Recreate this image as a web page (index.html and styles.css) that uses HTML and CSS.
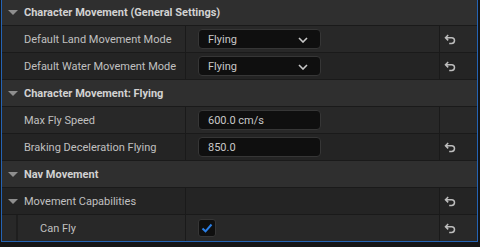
FILE: index.html
```html
<!DOCTYPE html>
<html lang='en'>
<head>
    <meta charset='UTF-8'>
    <title>Details</title>
    <link rel="stylesheet" href="styles.css">
</head>
<body>
    <div id='panel'>
        <div class='cat'><span class='tri'></span>Character Movement (General Settings)</div>
        <div class='row light'>
            <div class='name'>Default Land Movement Mode</div>
            <div class='value'>
                <div class='combo'>Flying<svg class='chev' width='10' height='6' viewBox='0 0 10 6'><path d='M1 1 L5 5 L9 1' fill='none' stroke='#c8c8c8' stroke-width='1.6'/></svg></div>
            </div>
            <div class='reset'><svg width='12' height='11' viewBox='0 0 12 11'><path d='M4.2 1 L1.5 3.7 L4.2 6.4 M1.9 3.7 H7.6 A2.9 2.9 0 0 1 7.6 9.5 H5.2' fill='none' stroke='#bdbdbd' stroke-width='1.5'/></svg></div>
        </div>
        <div class='row'>
            <div class='name'>Default Water Movement Mode</div>
            <div class='value'>
                <div class='combo'>Flying<svg class='chev' width='10' height='6' viewBox='0 0 10 6'><path d='M1 1 L5 5 L9 1' fill='none' stroke='#c8c8c8' stroke-width='1.6'/></svg></div>
            </div>
            <div class='reset'><svg width='12' height='11' viewBox='0 0 12 11'><path d='M4.2 1 L1.5 3.7 L4.2 6.4 M1.9 3.7 H7.6 A2.9 2.9 0 0 1 7.6 9.5 H5.2' fill='none' stroke='#bdbdbd' stroke-width='1.5'/></svg></div>
        </div>
        <div class='cat'><span class='tri'></span>Character Movement: Flying</div>
        <div class='row light'>
            <div class='name'>Max Fly Speed</div>
            <div class='value'><div class='field'>600.0 cm/s</div></div>
            <div class='reset'></div>
        </div>
        <div class='row'>
            <div class='name'>Braking Deceleration Flying</div>
            <div class='value'><div class='field'>850.0</div></div>
            <div class='reset'><svg width='12' height='11' viewBox='0 0 12 11'><path d='M4.2 1 L1.5 3.7 L4.2 6.4 M1.9 3.7 H7.6 A2.9 2.9 0 0 1 7.6 9.5 H5.2' fill='none' stroke='#bdbdbd' stroke-width='1.5'/></svg></div>
        </div>
        <div class='cat'><span class='tri'></span>Nav Movement</div>
        <div class='row'>
            <div class='name'><span class='tri'></span>Movement Capabilities</div>
            <div class='value'></div>
            <div class='reset'><svg width='12' height='11' viewBox='0 0 12 11'><path d='M4.2 1 L1.5 3.7 L4.2 6.4 M1.9 3.7 H7.6 A2.9 2.9 0 0 1 7.6 9.5 H5.2' fill='none' stroke='#bdbdbd' stroke-width='1.5'/></svg></div>
        </div>
        <div class='row light last'>
            <div class='name indent'><span class='guide'></span>Can Fly</div>
            <div class='value'>
                <div class='check'><svg width='12' height='10' viewBox='0 0 12 10'><path d='M1.5 5.5 L4.5 8.3 L10.5 1.5' fill='none' stroke='#2a7fe6' stroke-width='2'/></svg></div>
            </div>
            <div class='reset'><svg width='12' height='11' viewBox='0 0 12 11'><path d='M4.2 1 L1.5 3.7 L4.2 6.4 M1.9 3.7 H7.6 A2.9 2.9 0 0 1 7.6 9.5 H5.2' fill='none' stroke='#bdbdbd' stroke-width='1.5'/></svg></div>
        </div>
    </div>
</body>
</html>
```
FILE: styles.css
```css
html, body {
    margin: 0; padding: 0;
    background: #151515;
    font-family: Roboto, "Liberation Sans", sans-serif;
    font-size: 11px;
    color: #c0c0c0;
    overflow: hidden;
    white-space: nowrap;
}
#panel {
    width: 475px;
    margin: -1px 0 0 1px;
    border: 1px solid #2463b4;
    border-top: none;
    background: #1a1a1a;
}
.cat {
    display: flex; align-items: center;
    height: 26px;
    border-bottom: 1px solid #1a1a1a;
    background: #2f2f2f;
    font-weight: bold;
    color: #d2d2d2;
    padding-left: 22px;
    position: relative;
}
.tri {
    width: 0; height: 0;
    border-left: 5px solid transparent;
    border-right: 5px solid transparent;
    border-top: 5px solid #8e8e8e;
    position: absolute; left: 6px; top: 11px;
}
.row {
    display: grid;
    grid-template-columns: 183px 253px 37px;
    column-gap: 1px;
    height: 26px;
    border-bottom: 1px solid #1a1a1a;
    background: #1a1a1a;
}
.row.last { border-bottom: none; }
.row > div { background: #242424; display: flex; align-items: center; }
.row.light > div { background: #282828; }
.name { padding-left: 22px; position: relative; }
.name.indent { padding-left: 0; }
.guide {
    width: 14px; height: 26px;
    border-right: 2px solid #1e1e1e;
    margin-right: 22px;
}
.value { padding-left: 12px; }
.combo, .field {
    width: 112px; height: 18px;
    background: #0f0f0f;
    border: 1px solid #363636;
    border-radius: 4px;
    padding-left: 9px;
    display: flex; align-items: center;
    color: #c8c8c8;
    position: relative;
}
.chev { position: absolute; right: 12px; top: 7px; }
.check {
    width: 16px; height: 16px;
    background: #0f0f0f;
    border: 1px solid #363636;
    border-radius: 3px;
    display: flex; align-items: center; justify-content: center;
}
.reset { padding-left: 4px; }
```
